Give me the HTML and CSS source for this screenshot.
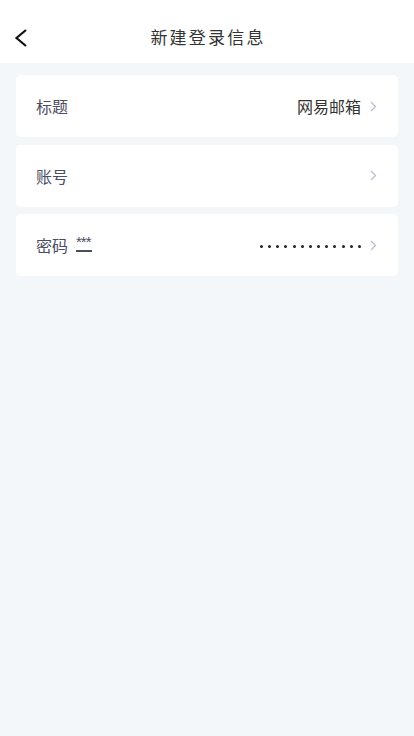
FILE: index.html
```html
<!DOCTYPE html>
<html lang="zh-CN">
<head>
    <meta charset="UTF-8">
    <meta name="viewport" content="width=device-width, initial-scale=1.0">
    <title>新建登录信息</title>
    <link rel="stylesheet" href="styles.css">
</head>
<body>
    <div class="header">
        <a class="back" href="#">
            <svg width="14" height="18" viewBox="0 0 14 18">
                <polyline points="12,1 2.5,9 12,17" fill="none" stroke="#111" stroke-width="2.2"/>
            </svg>
        </a>
        <h1>新建登录信息</h1>
    </div>

    <div class="list">
        <div class="row">
            <span class="label">标题</span>
            <span class="value">网易邮箱</span>
            <svg class="arrow" width="7" height="11" viewBox="0 0 7 11"><polyline points="1,1 5.5,5.5 1,10" fill="none" stroke="#b9bfcf" stroke-width="1.3"/></svg>
        </div>
        <div class="row">
            <span class="label">账号</span>
            <span class="value"></span>
            <svg class="arrow" width="7" height="11" viewBox="0 0 7 11"><polyline points="1,1 5.5,5.5 1,10" fill="none" stroke="#b9bfcf" stroke-width="1.3"/></svg>
        </div>
        <div class="row">
            <span class="label">密码</span>
            <span class="mask">***</span>
            <span class="value dots">
                <i></i><i></i><i></i><i></i><i></i><i></i><i></i><i></i><i></i><i></i><i></i><i></i><i></i>
            </span>
            <svg class="arrow" width="7" height="11" viewBox="0 0 7 11"><polyline points="1,1 5.5,5.5 1,10" fill="none" stroke="#b9bfcf" stroke-width="1.3"/></svg>
        </div>
    </div>
</body>
</html>
```

FILE: styles.css
```css
html, body {
    margin: 0;
    height: 100%;
}
body {
    font-family: "Noto Sans CJK SC", "Noto Sans", sans-serif;
    background-color: #f4f7fa;
}
.header {
    height: 63px;
    background: white;
    display: flex;
    align-items: center;
    justify-content: center;
    position: relative;
}
.back {
    position: absolute;
    left: 14px;
    top: 29px;
    display: flex;
}
.header h1 {
    margin: 0 0 0 2px;
    font-size: 17px;
    font-weight: normal;
    letter-spacing: 2.2px;
    color: #333;
    padding-top: 10px;
}
.list {
    padding: 12px 16px;
    display: flex;
    flex-direction: column;
    gap: 7.5px;
}
.row {
    height: 62px;
    background: white;
    border-radius: 5px;
    display: flex;
    align-items: center;
    padding: 0 21px 0 20px;
}
.label {
    font-size: 16px;
    color: #4c4c63;
}
.mask {
    margin-left: 8px;
    font-family: "Liberation Sans", sans-serif;
    font-size: 15px;
    line-height: 16px;
    color: #4c4c63;
    border-bottom: 2px solid #4c4c63;
    letter-spacing: -1px;
    padding-right: 1px;
    margin-top: -4px;
}
.value {
    margin-left: auto;
    font-size: 16px;
    color: #333;
}
.dots {
    display: flex;
    gap: 5.2px;
    margin-top: 2px;
}
.dots i {
    width: 3px;
    height: 3px;
    border-radius: 50%;
    background: #222;
}
.arrow {
    margin-left: 9px;
}
```
